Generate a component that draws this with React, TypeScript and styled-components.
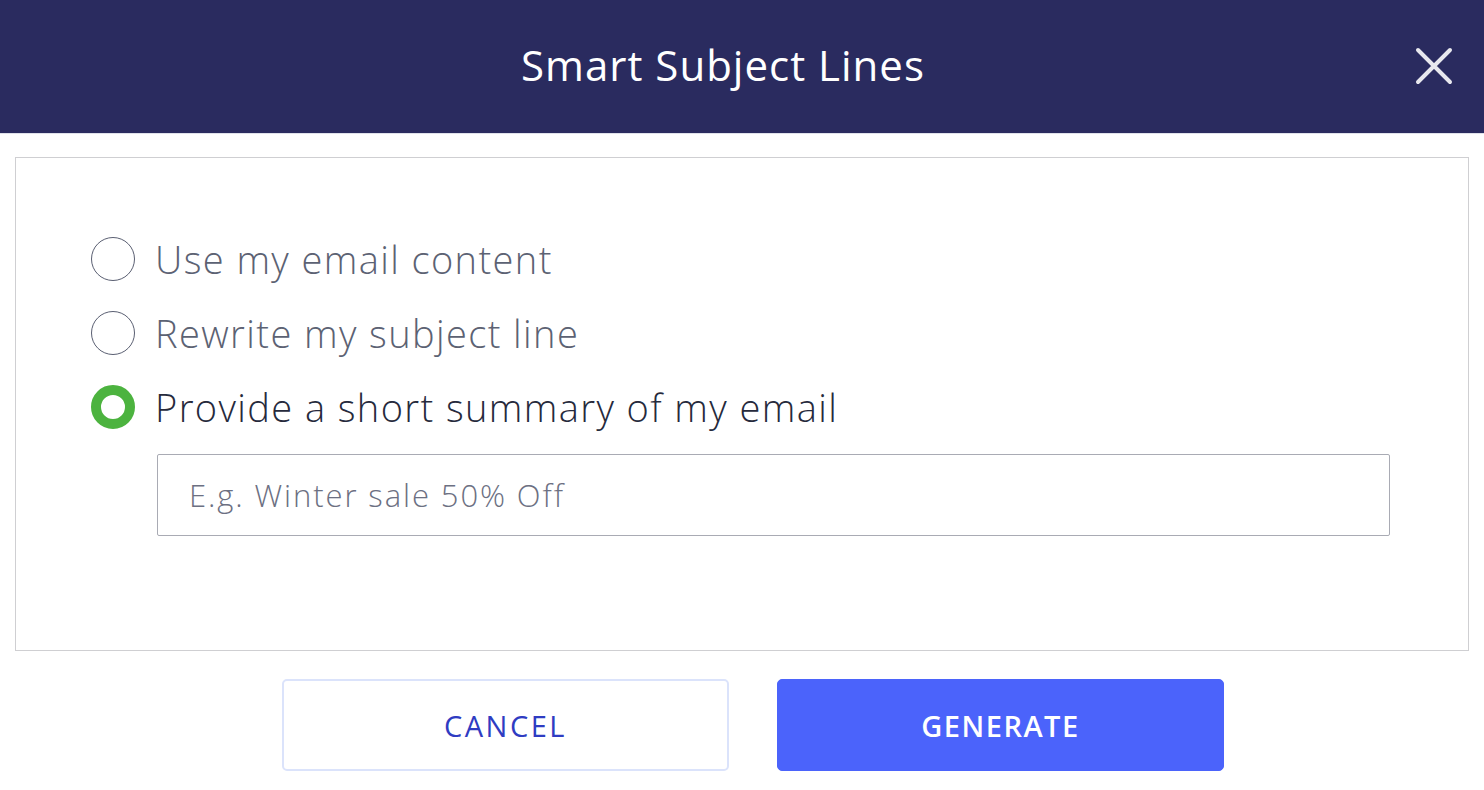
import styled, {createGlobalStyle} from 'styled-components'

const GlobalStyle = createGlobalStyle`
  html, body {
    margin: 0;
    padding: 0;
    background: #ffffff;
    font-family: 'Open Sans', 'Liberation Sans', sans-serif;
  }
`

const Modal = styled.div`
  width: 1484px;
  height: 790px;
  display: flex;
  flex-direction: column;
  background: #fff;
`

const Header = styled.header`
  height: 133px;
  background: #2a2b5f;
  display: flex;
  align-items: center;
  justify-content: center;
  padding-right: 38px;
  position: relative;
  border-bottom: 1px solid #dfe1ea;
`

const Title = styled.h1`
  margin: 0 0 4px 0;
  color: #ffffff;
  font-size: 42px;
  font-weight: 400;
  letter-spacing: 1px;
`

const CloseButton = styled.button`
  position: absolute;
  right: 30px;
  top: 46px;
  width: 40px;
  height: 40px;
  padding: 0;
  border: 0;
  background: transparent;
  cursor: pointer;
`

const Body = styled.section`
  margin: 23px 15px 0 15px;
  height: 494px;
  box-sizing: border-box;
  border: 1px solid #cfcfd2;
  padding: 64px 0 0 75px;
  display: flex;
  flex-direction: column;
`

const Option = styled.label`
  display: flex;
  align-items: center;
  height: 74px;
  gap: 20px;
  cursor: pointer;
`

const Radio = styled.span<{checked?: boolean}>`
  width: 44px;
  height: 44px;
  box-sizing: border-box;
  border-radius: 50%;
  border: ${p => (p.checked ? '10px solid #4cb33f' : '1.5px solid #5a5f72')};
  background: #fff;
  flex: none;
`

const OptionText = styled.span<{checked?: boolean}>`
  font-size: 38px;
  font-weight: 300;
  letter-spacing: 1.4px;
  color: ${p => (p.checked ? '#262a3c' : '#5c6273')};
`

const SummaryInput = styled.input`
  margin: 10px 0 0 66px;
  width: 1233px;
  height: 82px;
  box-sizing: border-box;
  border: 1px solid #a9abb4;
  border-radius: 2px;
  padding: 0 31px;
  font-family: inherit;
  font-size: 31px;
  font-weight: 300;
  letter-spacing: 1.9px;
  color: #262a3c;
  outline: none;
  &::placeholder {
    color: #6c7082;
  }
`

const Footer = styled.footer`
  display: flex;
  justify-content: center;
  gap: 48px;
  padding: 28px 0 0 22px;
`

const Button = styled.button<{primary?: boolean}>`
  width: 447px;
  height: 92px;
  box-sizing: border-box;
  border-radius: 5px;
  font-family: inherit;
  font-size: 29px;
  cursor: pointer;
  border: ${p => (p.primary ? '1px solid #4b63fb' : '2px solid #dbe3fb')};
  background: ${p => (p.primary ? '#4b63fb' : '#ffffff')};
  color: ${p => (p.primary ? '#ffffff' : '#2f3cc2')};
  font-weight: ${p => (p.primary ? 600 : 400)};
  letter-spacing: ${p => (p.primary ? '1.5px' : '2.5px')};
`

const options = [
  {label: 'Use my email content', checked: false},
  {label: 'Rewrite my subject line', checked: false},
  {label: 'Provide a short summary of my email', checked: true},
]

export default function App() {
  return (
    <>
      <GlobalStyle />
      <Modal>
        <Header>
          <Title>Smart Subject Lines</Title>
          <CloseButton aria-label="Close">
            <svg width="40" height="40" viewBox="0 0 40 40">
              <path
                d="M4 4 L36 36 M36 4 L4 36"
                stroke="#e8e8ee"
                strokeWidth="4"
                strokeLinecap="round"
              />
            </svg>
          </CloseButton>
        </Header>
        <Body>
          {options.map(o => (
            <Option key={o.label}>
              <Radio checked={o.checked} />
              <OptionText checked={o.checked}>{o.label}</OptionText>
            </Option>
          ))}
          <SummaryInput placeholder="E.g. Winter sale 50% Off" />
        </Body>
        <Footer>
          <Button>CANCEL</Button>
          <Button primary>GENERATE</Button>
        </Footer>
      </Modal>
    </>
  )
}
